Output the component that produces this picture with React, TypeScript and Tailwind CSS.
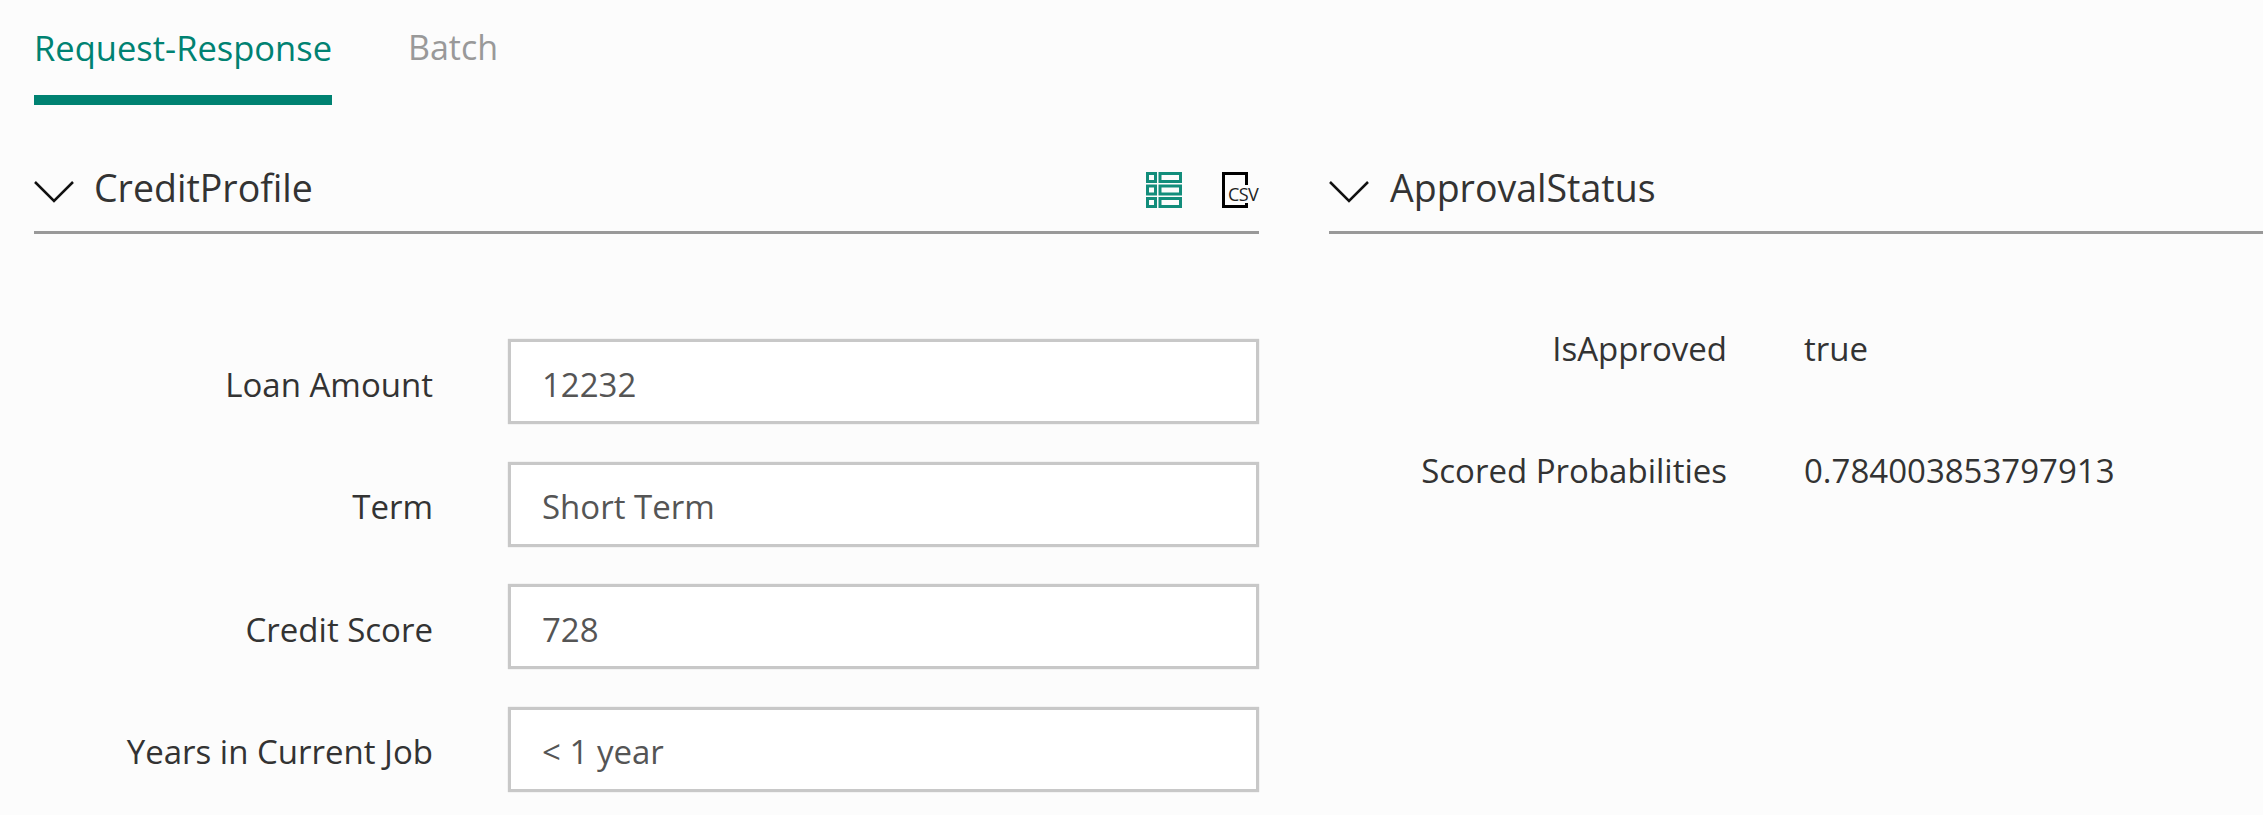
const font = "font-['Open_Sans',sans-serif]";

function Chevron() {
  return (
    <svg width="40" height="23" viewBox="0 0 40 23" fill="none" className="shrink-0">
      <path d="M1 2 L20 21 L39 2" stroke="#111" strokeWidth="2.5" />
    </svg>
  );
}

function GridIcon() {
  return (
    <svg width="36" height="36" viewBox="0 0 36 36" fill="none" stroke="#128d7b" strokeWidth="3">
      <rect x="1.5" y="1.5" width="8" height="8" />
      <rect x="14" y="1.5" width="20.5" height="8" />
      <rect x="1.5" y="14" width="8" height="8" />
      <rect x="14" y="14" width="20.5" height="8" />
      <rect x="1.5" y="26.5" width="8" height="8" />
      <rect x="14" y="26.5" width="20.5" height="8" />
    </svg>
  );
}

function CsvIcon() {
  return (
    <div className="relative w-[35px] h-[36px]">
      <svg width="26" height="36" viewBox="0 0 26 36" fill="none" stroke="#000" strokeWidth="3">
        <path d="M24.5 13 V1.5 H1.5 V34.5 H24.5 V31" />
      </svg>
      <span className="absolute left-[6px] top-[12px] text-[18px] leading-[20px] tracking-[-0.6px] text-[#222] font-['Open_Sans',sans-serif]">
        CSV
      </span>
    </div>
  );
}

function FormRow({ label, value }: { label: string; value: string }) {
  return (
    <div className="flex items-center h-[85px]">
      <label className="w-[399px] pt-[5px] text-right text-[#333] text-[33px] leading-[45px]">{label}</label>
      <div className="ml-[75px] flex-1 h-full flex items-center bg-white border-[3px] border-[#c8c8c8] shadow-[0_0_1px_#c8c8c8] pl-[31px] pt-[5px] text-[#555] text-[33px] leading-[45px]">
        {value}
      </div>
    </div>
  );
}

function ResultRow({ label, value }: { label: string; value: string }) {
  return (
    <div className="flex items-center h-[50px]">
      <span className="w-[398px] text-right text-[#333] text-[33px] whitespace-nowrap">{label}</span>
      <span className="ml-[77px] text-[#333] text-[33px]">{value}</span>
    </div>
  );
}

export default function App() {
  return (
    <div className={`${font} w-full h-[815px] overflow-hidden bg-[#fcfcfc]`}>
      {/* Tabs */}
      <div className="flex pl-[34px] h-[105px]">
        <div className="w-[298px] border-b-[10px] border-[#008272] text-[#008272] text-[34.5px] leading-[95px] whitespace-nowrap">
          Request-Response
        </div>
        <div className="ml-[76px] text-[#999] text-[34px] leading-[95px]">Batch</div>
      </div>

      <div className="flex pl-[34px]">
        {/* Input panel */}
        <div className="w-[1225px]">
          <div className="flex items-center h-[129px] pt-[46px] border-b-[3px] border-[#999]">
            <Chevron />
            <h2 className="ml-[20px] pb-[6px] text-[37.5px] text-[#333]">CreditProfile</h2>
            <div className="ml-auto flex items-center gap-[40px] pr-[2px] pb-[2px]">
              <GridIcon />
              <CsvIcon />
            </div>
          </div>
          <div className="pt-[105px] flex flex-col gap-[37.67px]">
            <FormRow label="Loan Amount" value="12232" />
            <FormRow label="Term" value="Short Term" />
            <FormRow label="Credit Score" value="728" />
            <FormRow label="Years in Current Job" value="< 1 year" />
          </div>
        </div>

        {/* Output panel */}
        <div className="ml-[70px] flex-1">
          <div className="flex items-center h-[129px] pt-[46px] border-b-[3px] border-[#999]">
            <Chevron />
            <h2 className="ml-[21px] pb-[6px] text-[37.5px] text-[#333]">ApprovalStatus</h2>
          </div>
          <div className="pt-[90px] flex flex-col gap-[72px]">
            <ResultRow label="IsApproved" value="true" />
            <ResultRow label="Scored Probabilities" value="0.784003853797913" />
          </div>
        </div>
      </div>
    </div>
  );
}
